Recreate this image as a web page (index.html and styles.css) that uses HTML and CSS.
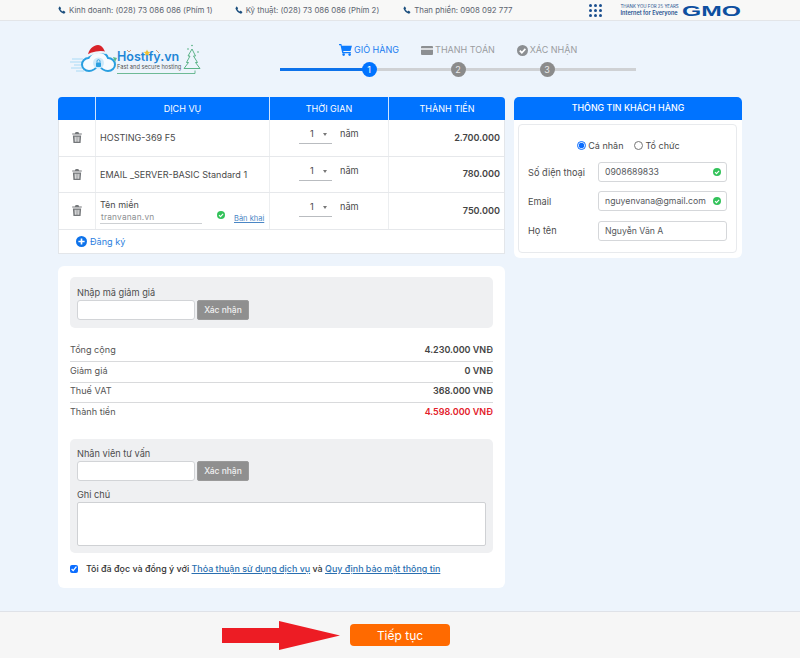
FILE: index.html
```html
<!DOCTYPE html>
<html lang="vi">
<head>
<meta charset="utf-8">
<title>Giỏ hàng</title>
<link rel="stylesheet" href="styles.css">
</head>
<body>
<svg class="defs" width="0" height="0" aria-hidden="true">
  <defs>
    <symbol id="phone" viewBox="0 0 16 16"><path d="M3.600 1 6 3.900c.3.400.3.900 0 1.200L5 6.300c.7 1.800 2.400 3.500 4.300 4.500l1.300-1.100c.4-.3.900-.3 1.200 0L14.700 12c.3.400.2.900-.1 1.200l-1.800 1.600c-.6.500-1.400.600-2.100.300C6.300 13.500 2.700 9.800 1.100 5.400.8 4.600 1 3.800 1.500 3.300L3 1c.2-.2.400-.2.600 0z" fill="#1c4f7e"/></symbol>
    <symbol id="trash" viewBox="0 0 14 16"><path d="M5 0h4l1 2h4v1.800H0V2h4zM1 5h12l-.8 11H1.800zm2.600 1.800.3 7.400h1.300L5 6.800zm2.700 0v7.400h1.400V6.800zm2.800 0-.2 7.400h1.300l.3-7.400z" fill="#74777a"/></symbol>
    <symbol id="ok" viewBox="0 0 16 16"><circle cx="8" cy="8" r="8" fill="#33c25a"/><path d="M4 8.300 7 11.200 12.200 5.600" fill="none" stroke="#fff" stroke-width="2.200"/></symbol>
  </defs>
</svg>

<div class="topbar">
  <div class="topbar-inner">
    <span class="contact c1"><svg class="ico-phone"><use href="#phone"/></svg>Kinh doanh: (028) 73 086 086 (Phím 1)</span>
    <span class="contact c2"><svg class="ico-phone"><use href="#phone"/></svg>Kỹ thuật: (028) 73 086 086 (Phím 2)</span>
    <span class="contact c3"><svg class="ico-phone"><use href="#phone"/></svg>Than phiền: 0908 092 777</span>
    <span class="apps"><i></i><i></i><i></i><i></i><i></i><i></i><i></i><i></i><i></i></span>
    <span class="gmo-thanks">THANK YOU FOR 25 YEARS<br><b>Internet for Everyone</b></span>
    <svg class="gmo" width="60" height="14" viewBox="0 0 60 14"><text x="0" y="12.500" textLength="59" lengthAdjust="spacingAndGlyphs" class="gmo-text">GMO</text></svg>
  </div>
</div>

<main class="page">
  <header class="head">
    <div class="logo">
      <svg class="logo-art" width="135" height="36" viewBox="0 0 135 36">
        <path d="M2 16h11M0 19h12M4 22h9M1 25h12M6 28h8" stroke="#a9daf5" stroke-width="1.200"/>
        <path d="M19 28c-4 0-7-3-7-6.500S15 15 18.500 15c2-4 6-6 10-6s8 2 9.500 6c4 0 7 3 7 6.500S42 28 38 28c-4 0-7-2.500-9.500-6-2.500 3.500-5.500 6-9.500 6z" fill="#f7fbff" stroke="#2a9fe0" stroke-width="2"/>
        <path d="M18 13c0-6 5-11 10-11 4 0 6 4 7 7-5-1-12 1-17 4z" fill="#d8232a"/>
        <path d="M17 13c5-3 13-5 19-3" stroke="#eef5fb" stroke-width="2.200" fill="none"/>
        <circle cx="28.500" cy="20" r="5.500" fill="#cde9fa"/>
        <rect x="26" y="19.500" width="5" height="4.500" rx=".8" fill="#2a9fe0"/>
        <path d="M27 19.500v-1.300a1.500 1.500 0 0 1 3 0v1.300" fill="none" stroke="#2a9fe0" stroke-width=".9"/>
        <text x="47" y="18" class="logo-name">Hostify.vn</text>
        <text x="47" y="25.500" class="logo-tag">Fast and secure hosting</text>
        <path d="M47 30.500h78v-3" stroke="#4cab7b" stroke-width=".8" fill="none"/>
        <path d="M122 6l3.500 7-2 0 4 6.500-2 0 4.500 6h-16l4.500-6-2 0 3.500-6.500-2 0z" fill="none" stroke="#4cab7b" stroke-width=".9"/>
        <circle cx="118" cy="6" r=".8" fill="#4cab7b"/><circle cx="128" cy="9" r=".8" fill="#4cab7b"/><circle cx="122" cy="2.500" r=".8" fill="#4cab7b"/>
        <path d="M77 6.500l1 2.200 2.300.2-1.800 1.500.6 2.300-2.100-1.300-2.100 1.300.6-2.300-1.800-1.500 2.300-.2z" fill="#f2c230"/>
        <path d="M57 7l2 2 2-2M86 7l3 3" stroke="#c98a5a" stroke-width=".8" fill="none"/>
        <path d="M43 14l4 1-2 4z" fill="#5bb98a"/>
      </svg>
    </div>
    <div class="stepper">
      <div class="step-labels">
        <span class="step-label active"><svg width="13" height="12" viewBox="0 0 14 13"><path d="M0 0h2.500l.5 1.800h11l-1.600 5.700H4.500l.3 1.200h8v1.300H3.500L1.600 1.300H0z" fill="#0d7cff"/><circle cx="5" cy="11.500" r="1.400" fill="#0d7cff"/><circle cx="11.500" cy="11.500" r="1.400" fill="#0d7cff"/></svg>GIỎ HÀNG</span>
        <span class="step-label"><svg width="12" height="9" viewBox="0 0 12 9"><rect width="12" height="9" rx="1" fill="#8c8f92"/><rect y="2" width="12" height="2" fill="#d9dbde"/></svg>THANH TOÁN</span>
        <span class="step-label"><svg width="11" height="11" viewBox="0 0 16 16"><circle cx="8" cy="8" r="8" fill="#8c8f92"/><path d="M4 8.300 7 11.200 12.200 5.600" fill="none" stroke="#fff" stroke-width="2.400"/></svg>XÁC NHẬN</span>
      </div>
      <div class="step-dots">
        <span class="dot active">1</span>
        <span class="dot">2</span>
        <span class="dot">3</span>
      </div>
    </div>
  </header>

  <div class="columns">
    <div class="col-left">
      <section class="cart">
        <div class="cart-row cart-head">
          <div></div><div>DỊCH VỤ</div><div>THỜI GIAN</div><div>THÀNH TIỀN</div>
        </div>
        <div class="cart-row">
          <div class="cell-trash"><svg class="ico-trash"><use href="#trash"/></svg></div>
          <div class="cell-name">HOSTING-369 F5</div>
          <div class="cell-time"><span class="sel">1<i class="caret"></i></span><span class="unit">năm</span></div>
          <div class="cell-price">2.700.000</div>
        </div>
        <div class="cart-row">
          <div class="cell-trash"><svg class="ico-trash"><use href="#trash"/></svg></div>
          <div class="cell-name">EMAIL _SERVER-BASIC Standard 1</div>
          <div class="cell-time"><span class="sel">1<i class="caret"></i></span><span class="unit">năm</span></div>
          <div class="cell-price">780.000</div>
        </div>
        <div class="cart-row">
          <div class="cell-trash"><svg class="ico-trash"><use href="#trash"/></svg></div>
          <div class="cell-domain">
            <div class="domain-main">
              <div class="domain-label">Tên miền</div>
              <div class="domain-value">tranvanan.vn</div>
            </div>
            <svg class="ico-ok"><use href="#ok"/></svg>
            <a class="declare">Bản khai</a>
          </div>
          <div class="cell-time"><span class="sel">1<i class="caret"></i></span><span class="unit">năm</span></div>
          <div class="cell-price">750.000</div>
        </div>
        <div class="cart-add">
          <svg width="11" height="11" viewBox="0 0 16 16"><circle cx="8" cy="8" r="8" fill="#0d72ea"/><path d="M8 3.500v9M3.500 8h9" stroke="#fff" stroke-width="2.400"/></svg>
          Đăng ký
        </div>
      </section>

      <section class="summary">
        <div class="panel panel-code">
          <label class="panel-label">Nhập mã giảm giá</label>
          <div class="code-row"><input class="code-input" type="text"><button class="code-btn">Xác nhận</button></div>
        </div>
        <dl class="totals">
          <div class="total"><dt>Tổng cộng</dt><dd>4.230.000 VNĐ</dd></div>
          <div class="total"><dt>Giảm giá</dt><dd>0 VNĐ</dd></div>
          <div class="total"><dt>Thuế VAT</dt><dd>368.000 VNĐ</dd></div>
          <div class="total"><dt>Thành tiền</dt><dd class="red">4.598.000 VNĐ</dd></div>
        </dl>
        <div class="panel panel-staff">
          <label class="panel-label">Nhân viên tư vấn</label>
          <div class="code-row"><input class="code-input" type="text"><button class="code-btn">Xác nhận</button></div>
          <label class="panel-label note-label">Ghi chú</label>
          <textarea class="note"></textarea>
        </div>
        <div class="agree">
          <input class="agree-check" type="checkbox" checked>
          <span>Tôi đã đọc và đồng ý với <a>Thỏa thuận sử dụng dịch vụ</a> và <a>Quy định bảo mật thông tin</a></span>
        </div>
      </section>
    </div>

    <aside class="customer">
      <h2 class="customer-title">THÔNG TIN KHÁCH HÀNG</h2>
      <div class="customer-box">
        <div class="radios">
          <label><input type="radio" name="kind" checked>Cá nhân</label>
          <label><input type="radio" name="kind">Tổ chức</label>
        </div>
        <div class="field"><span class="field-label">Số điện thoại</span><div class="field-input">0908689833<svg class="ico-ok"><use href="#ok"/></svg></div></div>
        <div class="field"><span class="field-label">Email</span><div class="field-input">nguyenvana@gmail.com<svg class="ico-ok"><use href="#ok"/></svg></div></div>
        <div class="field"><span class="field-label">Họ tên</span><div class="field-input">Nguyễn Văn A</div></div>
      </div>
    </aside>
  </div>
</main>

<footer class="footer">
  <svg class="arrow" width="120" height="30" viewBox="0 0 120 30"><path d="M0 7h57V0l61 14.500L57 29v-7H0z" fill="#ed1c24"/></svg>
  <button class="next">Tiếp tục</button>
</footer>
</body>
</html>
```

FILE: styles.css
```css
* { box-sizing: border-box; }
html, body { margin: 0; padding: 0; }
body {
  width: 800px;
  height: 658px;
  overflow: hidden;
  background: #edf4fc;
  font-family: Inter, "Noto Sans", sans-serif;
  font-size: 9.2px;
  color: #4a4a4a;
  display: flex;
  flex-direction: column;
}
.defs { display: block; height: 0; }

/* Top bar */
.topbar {
  height: 21px;
  background: #f8f8f7;
  border-bottom: 1px solid #e3e5e8;
  flex: none;
}
.topbar-inner { display: flex; align-items: center; height: 20px; padding-left: 58px; }
.contact { display: flex; align-items: center; gap: 3px; font-size: 7.85px; color: #5c6470; white-space: nowrap; }
.ico-phone { width: 8px; height: 8px; flex: none; }
.c2 { margin-left: 22px; }
.c3 { margin-left: 24px; }
.apps {
  margin-left: 77px;
  display: grid;
  grid-template-columns: repeat(3, 3px);
  gap: 2px;
  flex: none;
}
.apps i { width: 3px; height: 3px; border-radius: 50%; background: #1b4f8e; }
.gmo-thanks {
  margin-left: 18px;
  font-size: 4.400px;
  line-height: 7px;
  color: #1b4f8e;
  white-space: nowrap;
  width: 62px;
}
.gmo-thanks b { font-size: 5.600px; font-weight: 600; }
.gmo { display: block; flex: none; }
.gmo-text {
  font-family: "Liberation Sans", sans-serif;
  font-weight: 700;
  font-size: 15px;
  fill: #0d4fa0;
}

/* Page */
.page { flex: 1; padding: 0 58px; }
.head { display: flex; height: 76px; }
.logo { width: 222px; padding: 22px 0 0 12px; flex: none; }
.logo-art { display: block; }
.logo-name { font-family: Inter, sans-serif; font-size: 12.500px; font-weight: 600; fill: #1f86d6; }
.logo-tag { font-family: Inter, sans-serif; font-size: 5.700px; fill: #555; }

.stepper { width: 356px; padding-top: 22px; flex: none; }
.step-labels { display: grid; grid-template-columns: repeat(3, 89px); padding-left: 44.500px; height: 14px; }
.step-label {
  display: flex;
  align-items: center;
  justify-content: center;
  gap: 2px;
  white-space: nowrap;
  font-size: 9px;
  line-height: 14px;
  color: #9a9c9f;
}
.step-label.active { color: #1a7cf0; }
.step-dots {
  display: grid;
  grid-template-columns: repeat(3, 89px);
  padding-left: 44.500px;
  margin-top: 5px;
  height: 15px;
  justify-items: center;
  align-items: center;
  background: linear-gradient(to right, #0d72ea 25%, #cfd1d4 25%) no-repeat center / 100% 3px;
}
.dot {
  width: 15px;
  height: 15px;
  border-radius: 50%;
  background: #8b8b8b;
  color: #e8e8e8;
  font-size: 9px;
  line-height: 15px;
  text-align: center;
}
.dot.active { background: #0073ff; color: #fff; }

.columns { display: flex; align-items: flex-start; gap: 9px; }
.col-left { width: 447px; flex: none; }

/* Cart */
.cart {
  background: #fff;
  border: 1px solid #e3e6ea;
  border-top: 0;
  border-radius: 4px 4px 0 0;
}
.cart-row {
  display: grid;
  grid-template-columns: 37px 174px 119px 1fr;
  height: 36.500px;
  border-bottom: 1px solid #e6e8eb;
}
.cart-row > div { border-right: 1px solid #eceef0; }
.cart-row > div:last-child { border-right: 0; }
.cart-head {
  margin: 0 -1px;
  height: 23px;
  background: #0073ff;
  border: 0;
  border-radius: 4px 4px 0 0;
  color: #fff;
  font-size: 9px;
  grid-template-columns: 38px 174px 119px 1fr;
}
.cart-head > div {
  display: flex;
  align-items: center;
  justify-content: center;
  border-right: 1px solid #cfe4ff;
}
.cell-trash { display: flex; align-items: center; justify-content: center; }
.ico-trash { width: 10px; height: 11px; }
.cell-name {
  display: flex;
  align-items: center;
  padding: 0 0 0 4px;
  font-size: 9.050px;
  white-space: nowrap;
}
.cell-time {
  display: flex;
  align-items: flex-start;
  padding: 8px 0 0 29px;
  gap: 8px;
}
.sel {
  position: relative;
  display: block;
  width: 33px;
  height: 16px;
  border-bottom: 1px solid #b9bcc0;
  padding-left: 11px;
  font-size: 9.200px;
  line-height: 12px;
}
.caret {
  position: absolute;
  left: 24px;
  top: 5px;
  border: 2.200px solid transparent;
  border-top: 3px solid #777;
  border-bottom: 0;
}
.unit { line-height: 12px; font-size: 9.200px; }
.cell-price {
  display: flex;
  align-items: center;
  justify-content: flex-end;
  padding: 0 4px 1px 0;
  font-weight: 600;
  font-size: 9.100px;
  color: #444;
}
.cell-domain { display: flex; padding-left: 4px; }
.domain-main { width: 102px; padding-top: 5px; flex: none; }
.domain-label { font-size: 9px; line-height: 13px; color: #4a4a4a; }
.domain-value {
  font-size: 8.300px;
  line-height: 12px;
  height: 13px;
  padding: 0 0 0 1px;
  color: #8d8f92;
  letter-spacing: 0.2px;
  border-bottom: 1px solid #cdd0d3;
}
.cell-domain .ico-ok { margin: 18px 0 0 15px; }
.ico-ok { width: 8px; height: 8px; flex: none; }
.declare {
  margin: 21px 0 0 9px;
  font-size: 7.500px;
  line-height: 10px;
  color: #4a86c5;
  text-decoration: underline;
  white-space: nowrap;
}
.cart-add {
  height: 23px;
  display: flex;
  align-items: center;
  gap: 3px;
  padding-left: 17px;
  font-size: 9.100px;
  color: #2c7fe0;
}

/* Summary */
.summary {
  margin-top: 12.500px;
  height: 322px;
  background: #fff;
  border-radius: 6px;
  padding: 11px 12px 0;
}
.panel { background: #eff0f2; border-radius: 5px; padding: 10px 7px 0; }
.panel-code { height: 51px; }
.panel-staff { height: 114px; margin-top: 15.500px; padding-top: 9px; }
.panel-label { display: block; font-size: 9.200px; line-height: 12px; color: #4d4d4d; }
.note-label { margin-top: 8px; }
.code-row { display: flex; gap: 2px; margin-top: 1px; }
.code-input {
  width: 118px;
  height: 20px;
  border: 1px solid #d2d4d7;
  border-radius: 3px;
  background: #fff;
  padding: 0;
}
.code-btn {
  width: 52px;
  height: 20px;
  border: 1px solid #9a9a9a;
  border-radius: 2px;
  background: #8f8f8f;
  color: #f1f1f1;
  font-family: Inter, sans-serif;
  font-size: 8.500px;
  font-weight: 500;
  padding: 0;
}
.note {
  display: block;
  width: 409px;
  height: 44px;
  margin-top: 1px;
  border: 1px solid #cfd1d4;
  border-radius: 2px;
  background: #fff;
  padding: 0;
  resize: none;
}
.totals { margin: 13.500px 0 0; }
.total {
  display: flex;
  justify-content: space-between;
  align-items: center;
  height: 20.500px;
  padding-bottom: 3px;
  border-bottom: 1px solid #d9dadc;
  font-size: 9.100px;
}
.total:last-child { border-bottom: 0; }
.total dt { color: #555; }
.total dd { margin: 0; font-weight: 600; font-size: 9px; color: #444; }
.total dd.red { color: #e3202a; }
.agree { display: flex; align-items: center; gap: 8px; margin-top: 10px; font-size: 8.920px; font-weight: 500; line-height: 12px; color: #333; white-space: nowrap; }
.agree-check { width: 8px; height: 8px; margin: 0; accent-color: #0b6dff; flex: none; }
.agree a { color: #2a6fb0; text-decoration: underline; }

/* Customer */
.customer { width: 228px; flex: none; background: #fff; border-radius: 6px; padding-bottom: 5px; }
.customer-title {
  margin: 0;
  height: 23px;
  background: #0073ff;
  color: #fff;
  border-radius: 5px 5px 0 0;
  font-size: 8.900px;
  font-weight: 500;
  line-height: 22px;
  text-align: center;
}
.customer-box {
  margin: 4px 5px 0 4px;
  height: 129px;
  border: 1px solid #e8eaed;
  border-radius: 4px;
  padding: 13px 9px 0;
}
.radios { display: flex; justify-content: center; gap: 11px; height: 14px; padding-left: 2px; }
.radios label { display: flex; align-items: center; gap: 2px; font-size: 9px; }
.radios input { width: 9px; height: 9px; margin: 0; accent-color: #0b6dff; }
.field { display: flex; align-items: center; justify-content: space-between; margin-top: 9.300px; }
.radios + .field { margin-top: 10px; }
.field-label { font-size: 9.200px; color: #4d4d4d; }
.field-input {
  width: 129px;
  height: 20px;
  display: flex;
  align-items: center;
  justify-content: space-between;
  padding: 0 5px 0 6px;
  background: #fff;
  border: 1px solid #d5d7da;
  border-radius: 3px;
  font-size: 8.700px;
  color: #55585c;
  white-space: nowrap;
}

/* Footer */
.footer {
  flex: none;
  height: 47px;
  display: flex;
  align-items: center;
  padding-left: 222px;
  gap: 8px;
  background: #f6f6f6;
  border-top: 1px solid #dfe2e8;
}
.arrow { display: block; flex: none; margin-top: 2px; }
.next {
  width: 100px;
  height: 22px;
  border: 0;
  border-radius: 4px;
  background: #ff6a00;
  color: #fff;
  font-family: Inter, sans-serif;
  font-size: 12px;
  font-weight: 400;
  padding: 0;
}
```
